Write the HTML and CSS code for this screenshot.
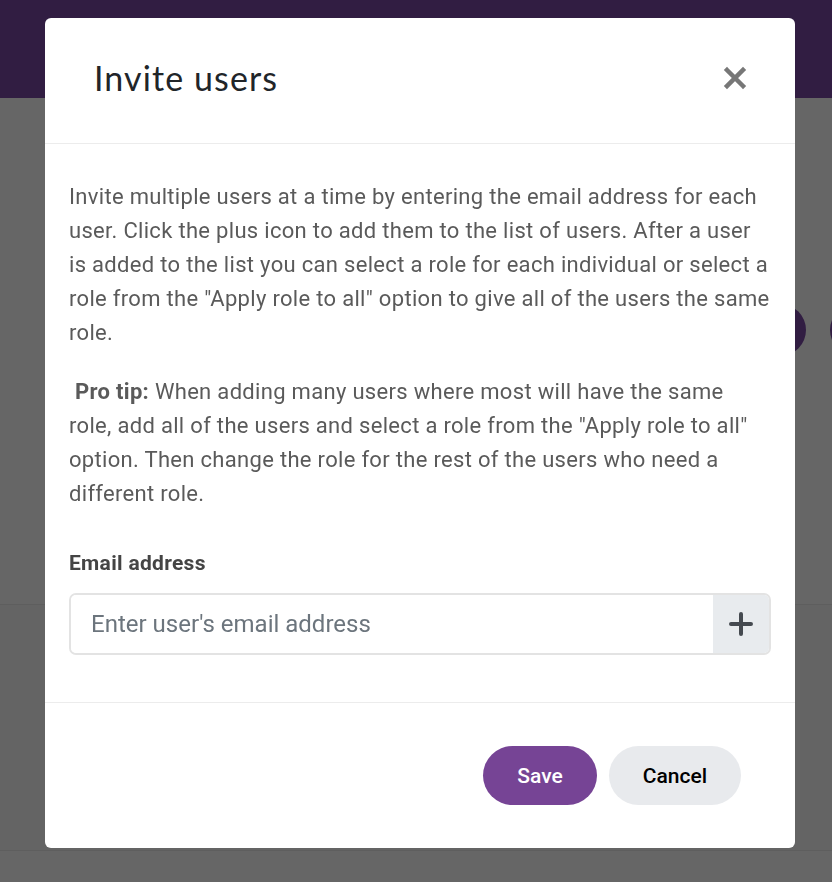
FILE: index.html
```html
<!DOCTYPE html>
<html lang="en">
<head>
    <meta charset="UTF-8">
    <meta name="viewport" content="width=device-width, initial-scale=1.0">
    <title>Invite users</title>
    <link rel="stylesheet" href="styles.css">
</head>
<body>
    <div class="page">
        <div class="topbar"></div>
        <div class="content">
            <div class="toolbar">
                <span class="dot"></span>
                <span class="dot"></span>
            </div>
            <div class="table-row"></div>
            <div class="table-row last"></div>
        </div>
    </div>

    <div class="backdrop">
        <div class="modal">
            <div class="modal-header">
                <h2>Invite users</h2>
                <button class="close" type="button" aria-label="Close">
                    <svg width="24" height="24" viewBox="0 0 24 24">
                        <path d="M4 4 L20 20 M20 4 L4 20" stroke="#777" stroke-width="4.5" stroke-linecap="square" fill="none"/>
                    </svg>
                </button>
            </div>
            <div class="modal-body">
                <p>Invite multiple users at a time by entering the email address for each user. Click the plus icon to add them to the list of users. After a user is added to the list you can select a role for each individual or select a role from the "Apply role to all" option to give all of the users the same role.</p>
                <p class="tip-text"><strong>Pro tip:</strong> When adding many users where most will have the same role, add all of the users and select a role from the "Apply role to all" option. Then change the role for the rest of the users who need a different role.</p>
                <label for="email" class="field-label">Email address</label>
                <div class="input-group">
                    <input type="email" id="email" placeholder="Enter user's email address">
                    <button class="add" type="button" aria-label="Add user">
                        <svg width="24" height="24" viewBox="0 0 24 24">
                            <path d="M12 2 V22 M2 12 H22" stroke="#454a50" stroke-width="4" stroke-linecap="round" fill="none"/>
                        </svg>
                    </button>
                </div>
            </div>
            <div class="modal-footer">
                <button class="btn btn-save" type="button">Save</button>
                <button class="btn btn-cancel" type="button">Cancel</button>
            </div>
        </div>
    </div>
</body>
</html>
```

FILE: styles.css
```css
body, h2, p {
    margin: 0;
    padding: 0;
    box-sizing: border-box;
}

body {
    font-family: Roboto, "Liberation Sans", sans-serif;
    background-color: #fff;
    height: 882px;
    overflow: hidden;
}

.page {
    height: 100%;
    overflow: hidden;
}

.topbar {
    height: 98px;
    background-color: #7a4aa6;
}

.content {
    background: #fff;
}

.toolbar {
    height: 506px;
    display: flex;
    justify-content: flex-end;
    gap: 24px;
    padding: 206px 0 0 0;
    box-sizing: border-box;
    margin-right: -50px;
}

.dot {
    width: 52px;
    height: 52px;
    border-radius: 50%;
    background-color: #7a4aa6;
}

.table-row {
    height: 245px;
    border-top: 1px solid #eaeaea;
    background: #fbfbfb;
}

.table-row.last {
    height: 40px;
    background: #fff;
}

.backdrop {
    position: fixed;
    inset: 0;
    background-color: rgba(0, 0, 0, 0.6);
}

.modal {
    margin: 18px 0 0 45px;
    width: 750px;
    height: 830px;
    background: #fff;
    border-radius: 6px;
    display: flex;
    flex-direction: column;
}

.modal-header {
    height: 126px;
    flex-shrink: 0;
    box-sizing: border-box;
    border-bottom: 1px solid #ececec;
    display: flex;
    align-items: center;
    justify-content: space-between;
    padding: 0 48px 6px 49px;
}

.modal-header h2 {
    font-family: Lato, sans-serif;
    font-weight: 400;
    font-size: 34px;
    color: #212529;
    letter-spacing: 1.1px;
}

.close {
    border: none;
    background: none;
    padding: 0;
    width: 24px;
    height: 24px;
    cursor: pointer;
}

.modal-body {
    padding: 36px 24px 47px 24px;
    border-bottom: 1px solid #ececec;
    color: #5a5a5a;
    font-size: 22px;
    line-height: 34px;
}

.modal-body p {
    margin-right: 1px;
    margin-bottom: 25px;
    letter-spacing: 0.31px;
}

.modal-body strong {
    font-weight: 700;
}

.tip-text {
    text-indent: 6px;
}

.field-label {
    display: block;
    font-weight: 700;
    font-size: 21px;
    letter-spacing: 0.3px;
    color: #444;
    margin: 35px 0 13px;
}

.input-group {
    display: flex;
    height: 62px;
    border: 2px solid #e3e3e3;
    border-radius: 7px;
    box-sizing: border-box;
    overflow: hidden;
}

.input-group input {
    flex: 1;
    border: none;
    outline: none;
    padding: 0 20px;
    font-family: Roboto, sans-serif;
    font-size: 24px;
    color: #333;
}

.input-group input::placeholder {
    color: #6c757d;
}

.add {
    width: 56px;
    border: none;
    background-color: #e8ebee;
    display: flex;
    align-items: center;
    justify-content: center;
    cursor: pointer;
}

.modal-footer {
    flex: 1;
    display: flex;
    justify-content: flex-end;
    align-items: center;
    gap: 12px;
    padding: 0 54px 0 24px;
}

.btn {
    height: 59px;
    border: none;
    border-radius: 30px;
    font-family: Roboto, sans-serif;
    font-size: 21px;
    font-weight: 500;
    padding: 0 34px;
    cursor: pointer;
}

.btn-save {
    background-color: #764495;
    color: #fff;
}

.btn-cancel {
    background-color: #e8eaed;
    color: #000;
}
```
